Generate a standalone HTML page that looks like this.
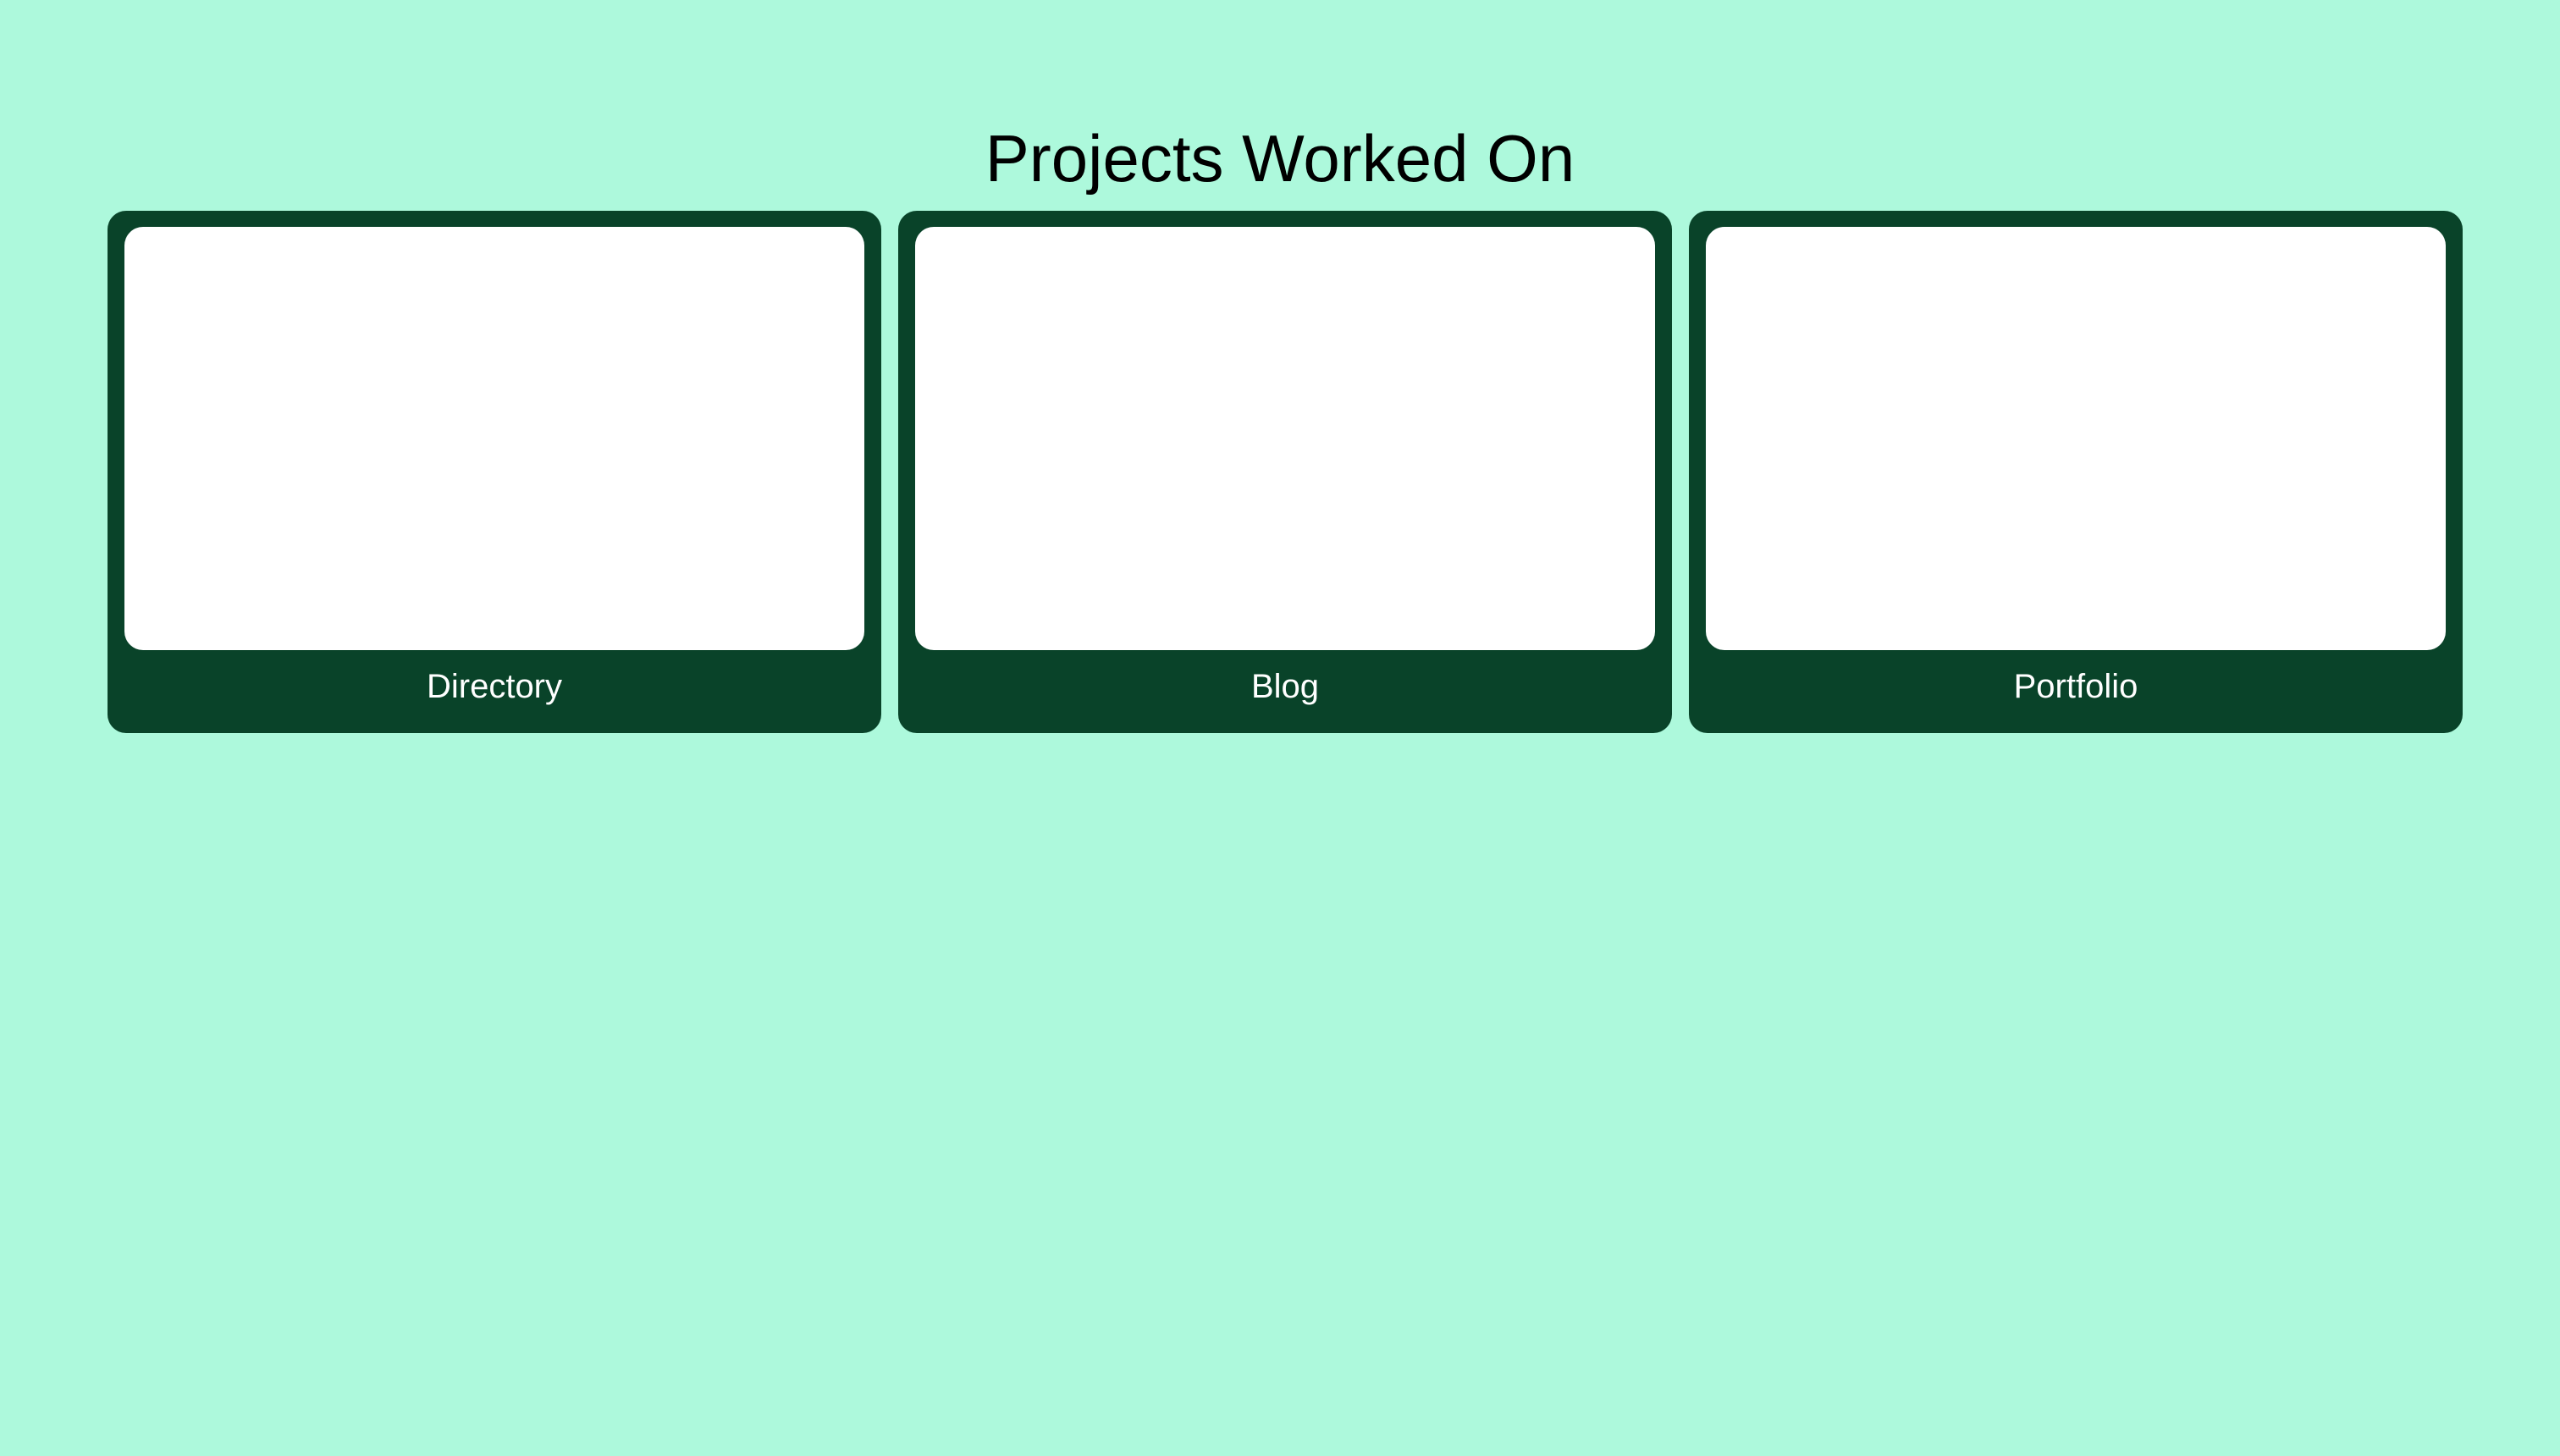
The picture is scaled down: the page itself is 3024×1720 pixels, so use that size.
<!DOCTYPE html>
<html><head><meta charset="utf-8"><style>
html,body{margin:0;padding:0;width:3024px;height:1720px;background:#adf9dc;overflow:hidden;font-family:"Liberation Sans",sans-serif}
h1{position:absolute;left:0;width:3024px;top:137px;margin:0;text-align:center;font-weight:400;font-size:78px;line-height:100px;color:#000}
.card{position:absolute;top:249px;width:914px;height:617px;background:#094329;border-radius:22px}
.img{position:absolute;left:20px;top:19px;width:874px;height:500px;background:#fff;border-radius:22px}
.lbl{position:absolute;top:785px;color:#fff;font-size:40px;text-align:center;line-height:52px}
</style></head><body>
<h1>Projects Worked On</h1>
<div class="card" style="left:127px"><div class="img"></div></div>
<div class="card" style="left:1061px"><div class="img"></div></div>
<div class="card" style="left:1995px"><div class="img"></div></div>
<div class="lbl" style="left:127px;width:914px">Directory</div>
<div class="lbl" style="left:1061px;width:914px">Blog</div>
<div class="lbl" style="left:1995px;width:914px">Portfolio</div>
</body></html>
